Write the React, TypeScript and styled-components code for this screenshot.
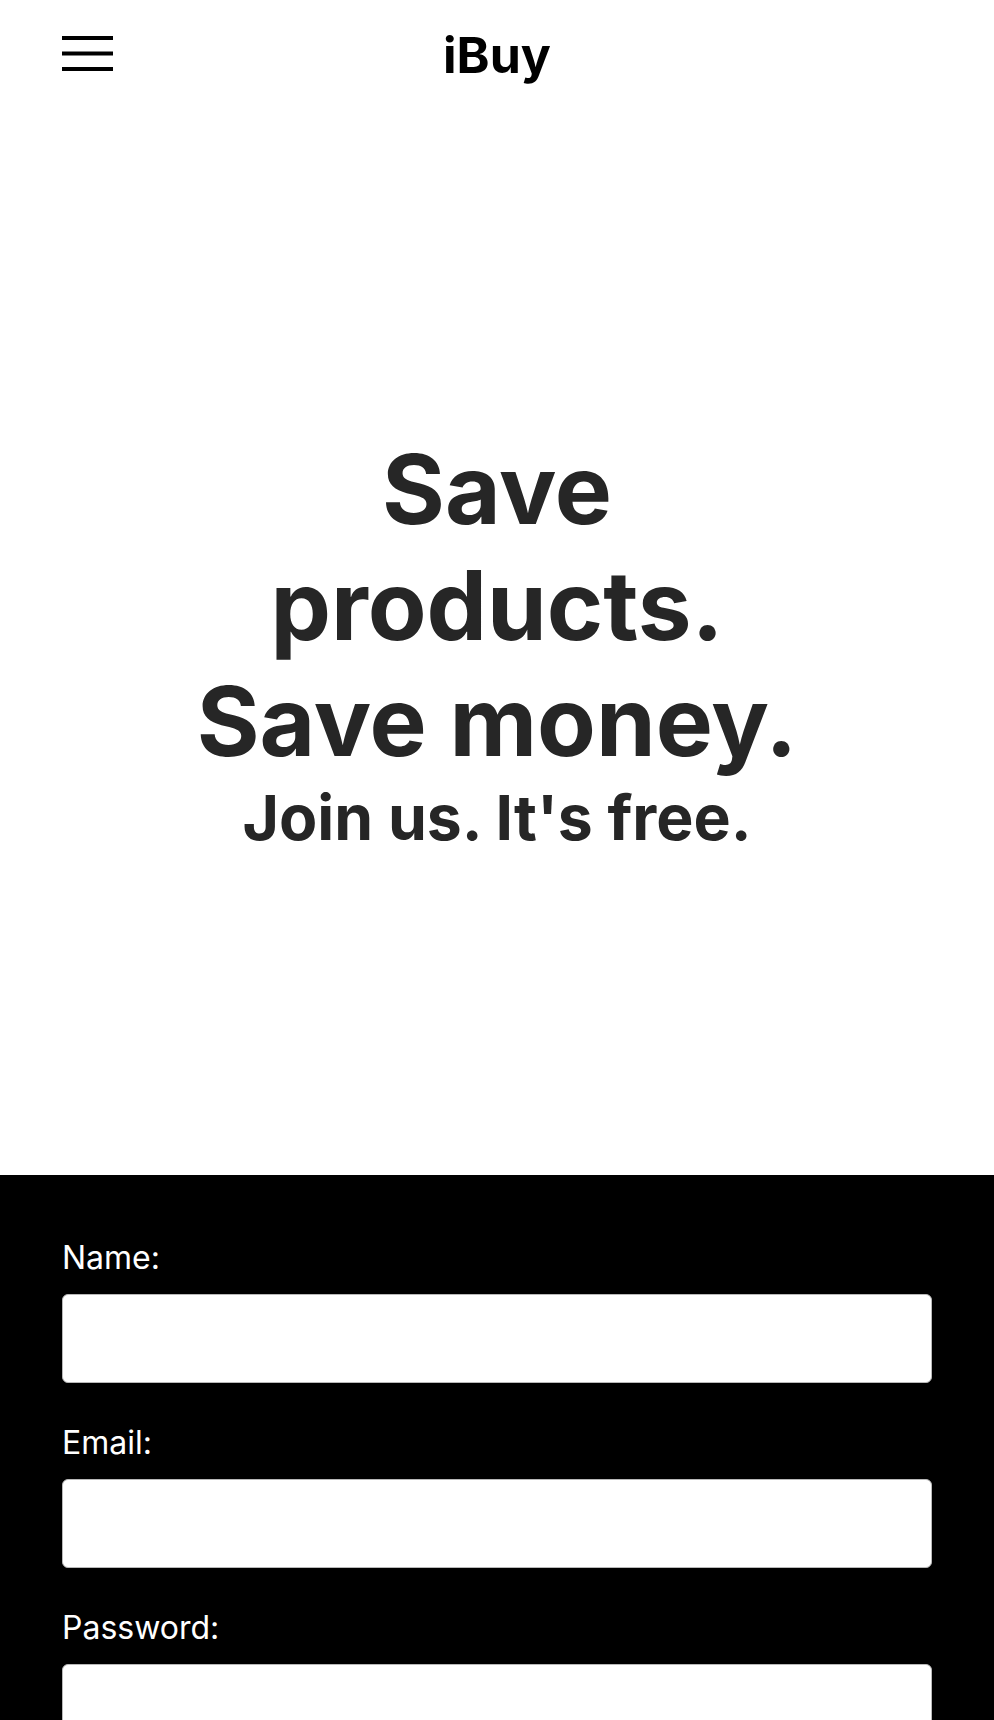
import React from "react";
import styled, { createGlobalStyle } from "styled-components";

const GlobalStyle = createGlobalStyle`
  * { box-sizing: border-box; }
  html, body { margin: 0; padding: 0; background: #fff; }
  body { font-family: Inter, "Noto Sans", Arial, sans-serif; }
`;

const Header = styled.header`
  display: grid;
  grid-template-columns: 1fr auto 1fr;
  align-items: start;
  height: 110px;
  padding: 25px 62px 0;
`;

const MenuButton = styled.button`
  justify-self: start;
  display: flex;
  padding: 0;
  margin-top: 11px;
  border: none;
  background: transparent;
  cursor: pointer;
`;

const Logo = styled.div`
  font-family: Inter, sans-serif;
  font-weight: 700;
  font-size: 50px;
  line-height: normal;
  color: #000;
`;

const Hero = styled.section`
  display: flex;
  flex-direction: column;
  align-items: center;
  justify-content: center;
  height: 1065px;
  text-align: center;
  color: #262626;
`;

const Title = styled.h1`
  margin: 0;
  max-width: 640px;
  font-family: Inter, sans-serif;
  font-weight: 700;
  font-size: 96px;
  line-height: normal;
`;

const Subtitle = styled.h2`
  margin: 0;
  font-family: Inter, sans-serif;
  font-weight: 700;
  font-size: 62.5px;
  line-height: normal;
`;

const FormSection = styled.section`
  background: #000;
  padding: 63px 62px 80px;
`;

const Form = styled.form`
  display: flex;
  flex-direction: column;
`;

const Label = styled.label`
  display: block;
  font-family: Inter, sans-serif;
  font-weight: 400;
  font-size: 32px;
  line-height: 39px;
  color: #fff;
  margin-bottom: 17px;
`;

const Input = styled.input`
  display: block;
  width: 100%;
  height: 89px;
  margin: 0 0 40px;
  padding: 0 16px;
  font-family: Inter, sans-serif;
  font-size: 28px;
  background: #fff;
  border: 1.5px solid #b8b8b8;
  border-radius: 6px;
  outline: none;
`;

const MenuIcon = () => (
  <svg width="51" height="35" viewBox="0 0 51 35" aria-hidden="true">
    <rect x="0" y="0" width="51" height="4" fill="#000" />
    <rect x="0" y="15.5" width="51" height="4" fill="#000" />
    <rect x="0" y="31" width="51" height="4" fill="#000" />
  </svg>
);

export default function App() {
  return (
    <>
      <GlobalStyle />
      <Header>
        <MenuButton aria-label="Menu">
          <MenuIcon />
        </MenuButton>
        <Logo>iBuy</Logo>
      </Header>
      <Hero>
        <Title>Save products. Save money.</Title>
        <Subtitle>Join us. It's free.</Subtitle>
      </Hero>
      <FormSection>
        <Form onSubmit={(e) => e.preventDefault()}>
          <Label htmlFor="name">Name:</Label>
          <Input id="name" type="text" />
          <Label htmlFor="email">Email:</Label>
          <Input id="email" type="email" />
          <Label htmlFor="password">Password:</Label>
          <Input id="password" type="password" />
        </Form>
      </FormSection>
    </>
  );
}
